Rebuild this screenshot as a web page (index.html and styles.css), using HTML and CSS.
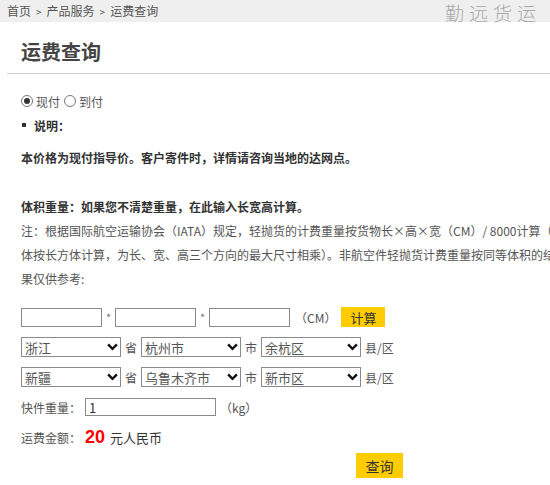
FILE: index.html
```html
<!DOCTYPE html>
<html lang="zh-CN">
<head>
<meta charset="utf-8">
<title>运费查询</title>
<link rel="stylesheet" href="styles.css">
</head>
<body>
<div class="topbar">
  <div class="crumbs">首页<span class="sep">&gt;</span>产品服务<span class="sep">&gt;</span>运费查询</div>
  <div class="brand">勤远货运</div>
</div>
<div class="title-wrap"><h1 class="title">运费查询</h1></div>
<div class="content">
  <div class="pay-row">
    <label class="radio-label"><input type="radio" name="pay" class="radio" checked>现付</label>
    <label class="radio-label"><input type="radio" name="pay" class="radio">到付</label>
  </div>
  <div class="note-head"><span class="bullet"></span>说明：</div>
  <p class="strong-line first">本价格为现付指导价。客户寄件时，详情请咨询当地的达网点。</p>
  <p class="strong-line second">体积重量：如果您不清楚重量，在此输入长宽高计算。</p>
  <p class="note">注：根据国际航空运输协会（IATA）规定，轻抛货的计费重量按货物长×高×宽（CM）/ 8000计算（</p>
  <p class="note">体按长方体计算，为长、宽、高三个方向的最大尺寸相乘）。非航空件轻抛货计费重量按同等体积的结</p>
  <p class="note">果仅供参考:</p>

  <div class="form">
    <div class="row">
      <input type="text" class="box dim">
      <span class="star">*</span>
      <input type="text" class="box dim">
      <span class="star">*</span>
      <input type="text" class="box dim">
      <span class="unit">（CM）</span>
      <button class="btn btn-calc">计算</button>
    </div>
    <div class="row">
      <span class="sel"><select><option>浙江</option></select><svg class="chev" viewBox="0 0 10 7"><path d="M1 1.2 L5 5.2 L9 1.2" /></svg></span>
      <span class="lbl">省</span>
      <span class="sel"><select><option>杭州市</option></select><svg class="chev" viewBox="0 0 10 7"><path d="M1 1.2 L5 5.2 L9 1.2" /></svg></span>
      <span class="lbl">市</span>
      <span class="sel"><select><option>余杭区</option></select><svg class="chev" viewBox="0 0 10 7"><path d="M1 1.2 L5 5.2 L9 1.2" /></svg></span>
      <span class="lbl">县/区</span>
    </div>
    <div class="row">
      <span class="sel"><select><option>新疆</option></select><svg class="chev" viewBox="0 0 10 7"><path d="M1 1.2 L5 5.2 L9 1.2" /></svg></span>
      <span class="lbl">省</span>
      <span class="sel"><select><option>乌鲁木齐市</option></select><svg class="chev" viewBox="0 0 10 7"><path d="M1 1.2 L5 5.2 L9 1.2" /></svg></span>
      <span class="lbl">市</span>
      <span class="sel"><select><option>新市区</option></select><svg class="chev" viewBox="0 0 10 7"><path d="M1 1.2 L5 5.2 L9 1.2" /></svg></span>
      <span class="lbl">县/区</span>
    </div>
    <div class="row">
      <span class="field-label">快件重量：</span>
      <input type="text" class="box weight" value="1">
      <span class="unit kg">（kg）</span>
    </div>
    <div class="row">
      <span class="field-label">运费金额：</span>
      <span class="price">20</span>
      <span class="currency">元人民币</span>
    </div>
    <div class="row submit-row">
      <button class="btn btn-query">查询</button>
    </div>
  </div>
</div>
</body>
</html>
```

FILE: styles.css
```css
html, body {
  margin: 0;
  padding: 0;
  overflow: hidden;
  background: #fff;
}
body {
  width: 550px;
  height: 485px;
  font-family: "Noto Sans CJK SC", "Noto Sans", sans-serif;
  font-size: 12px;
  color: #555;
}
.topbar {
  height: 22px;
  background: #efefef;
  display: flex;
  justify-content: space-between;
  align-items: center;
}
.crumbs {
  padding-left: 7px;
  font-size: 12px;
  color: #555;
  line-height: 22px;
}
.sep {
  margin: 0 5px;
  font-size: 10px;
}
.brand {
  padding-right: 9px;
  font-size: 19px;
  letter-spacing: 5px;
  color: #a8a8a8;
  line-height: 22px;
  margin-top: 3px;
  font-weight: 300;
}
.title-wrap {
  margin: 16px 0 0 7px;
  padding: 0 0 7px 14px;
  border-bottom: 1px solid #cfcfcf;
}
.title {
  margin: 0;
  font-size: 20px;
  line-height: 28px;
  font-weight: bold;
  color: #444;
}
.content {
  padding-left: 21px;
  white-space: nowrap;
}
.pay-row {
  margin-top: 17px;
  height: 20px;
  display: flex;
  align-items: center;
}
.radio-label {
  display: flex;
  align-items: center;
  color: #555;
  margin-right: 4px;
}
.radio {
  appearance: none;
  -webkit-appearance: none;
  width: 12px;
  height: 12px;
  margin: 0 3px 0 0;
  border: 1px solid #777;
  border-radius: 50%;
  background: #fff;
  box-sizing: border-box;
  position: relative;
}
.radio:checked::after {
  content: "";
  position: absolute;
  left: 2px;
  top: 2px;
  width: 6px;
  height: 6px;
  border-radius: 50%;
  background: #333;
}
.note-head {
  margin-top: 4px;
  height: 20px;
  display: flex;
  align-items: center;
  font-weight: bold;
  color: #333;
}
.bullet {
  width: 4px;
  height: 4px;
  background: #333;
  margin: 0 8px 0 1px;
}
p {
  margin: 0;
}
.strong-line {
  font-weight: bold;
  color: #333;
  line-height: 24px;
}
.strong-line.first {
  margin-top: 11px;
}
.strong-line.second {
  margin-top: 25px;
}
.note {
  line-height: 24px;
  color: #555;
}
.form {
  margin-top: 16px;
  display: flex;
  flex-direction: column;
  gap: 10px;
}
.row {
  display: flex;
  align-items: center;
  height: 20px;
}
.box {
  box-sizing: border-box;
  height: 19px;
  border: 1px solid #8a8a8a;
  padding: 0 3px;
  font-family: inherit;
  font-size: 12px;
  color: #333;
  outline: none;
  margin: 0;
}
.dim {
  width: 81px;
}
.star {
  width: 13px;
  text-align: center;
  color: #777;
  font-size: 11px;
}
.unit {
  margin-left: 5px;
  color: #555;
}
.btn {
  border: none;
  background: #ffcc00;
  color: #333;
  font-family: inherit;
  padding: 0;
  margin: 0;
  cursor: pointer;
}
.btn-calc {
  margin-left: 5px;
  width: 44px;
  height: 20px;
  font-size: 13px;
}
.sel {
  position: relative;
  display: inline-block;
  width: 100px;
  height: 20px;
}
.sel select {
  appearance: none;
  -webkit-appearance: none;
  box-sizing: border-box;
  width: 100px;
  height: 20px;
  border: 1px solid #8a8a8a;
  border-radius: 0;
  background: #fff;
  font-family: inherit;
  font-size: 13px;
  color: #555;
  padding: 0 0 0 3px;
  margin: 0;
  outline: none;
}
.chev {
  position: absolute;
  right: 3px;
  top: 6px;
  width: 11px;
  height: 8px;
  fill: none;
  stroke: #111;
  stroke-width: 2.2;
  pointer-events: none;
}
.lbl {
  margin: 0 4px;
  color: #555;
  font-size: 12px;
}
.field-label {
  width: 64px;
  color: #555;
}
.weight {
  width: 131px;
  height: 18px;
  font-size: 13px;
}
.kg {
  margin-left: 4px;
}
.price {
  color: #f00;
  font-size: 18px;
  font-weight: bold;
  font-family: "Liberation Sans", sans-serif;
  margin-right: 5px;
}
.currency {
  font-size: 13px;
  color: #333;
}
.submit-row {
  height: 25px;
  margin-top: -4px;
}
.btn-query {
  margin-left: 335px;
  width: 47px;
  height: 25px;
  font-size: 14px;
}
```
